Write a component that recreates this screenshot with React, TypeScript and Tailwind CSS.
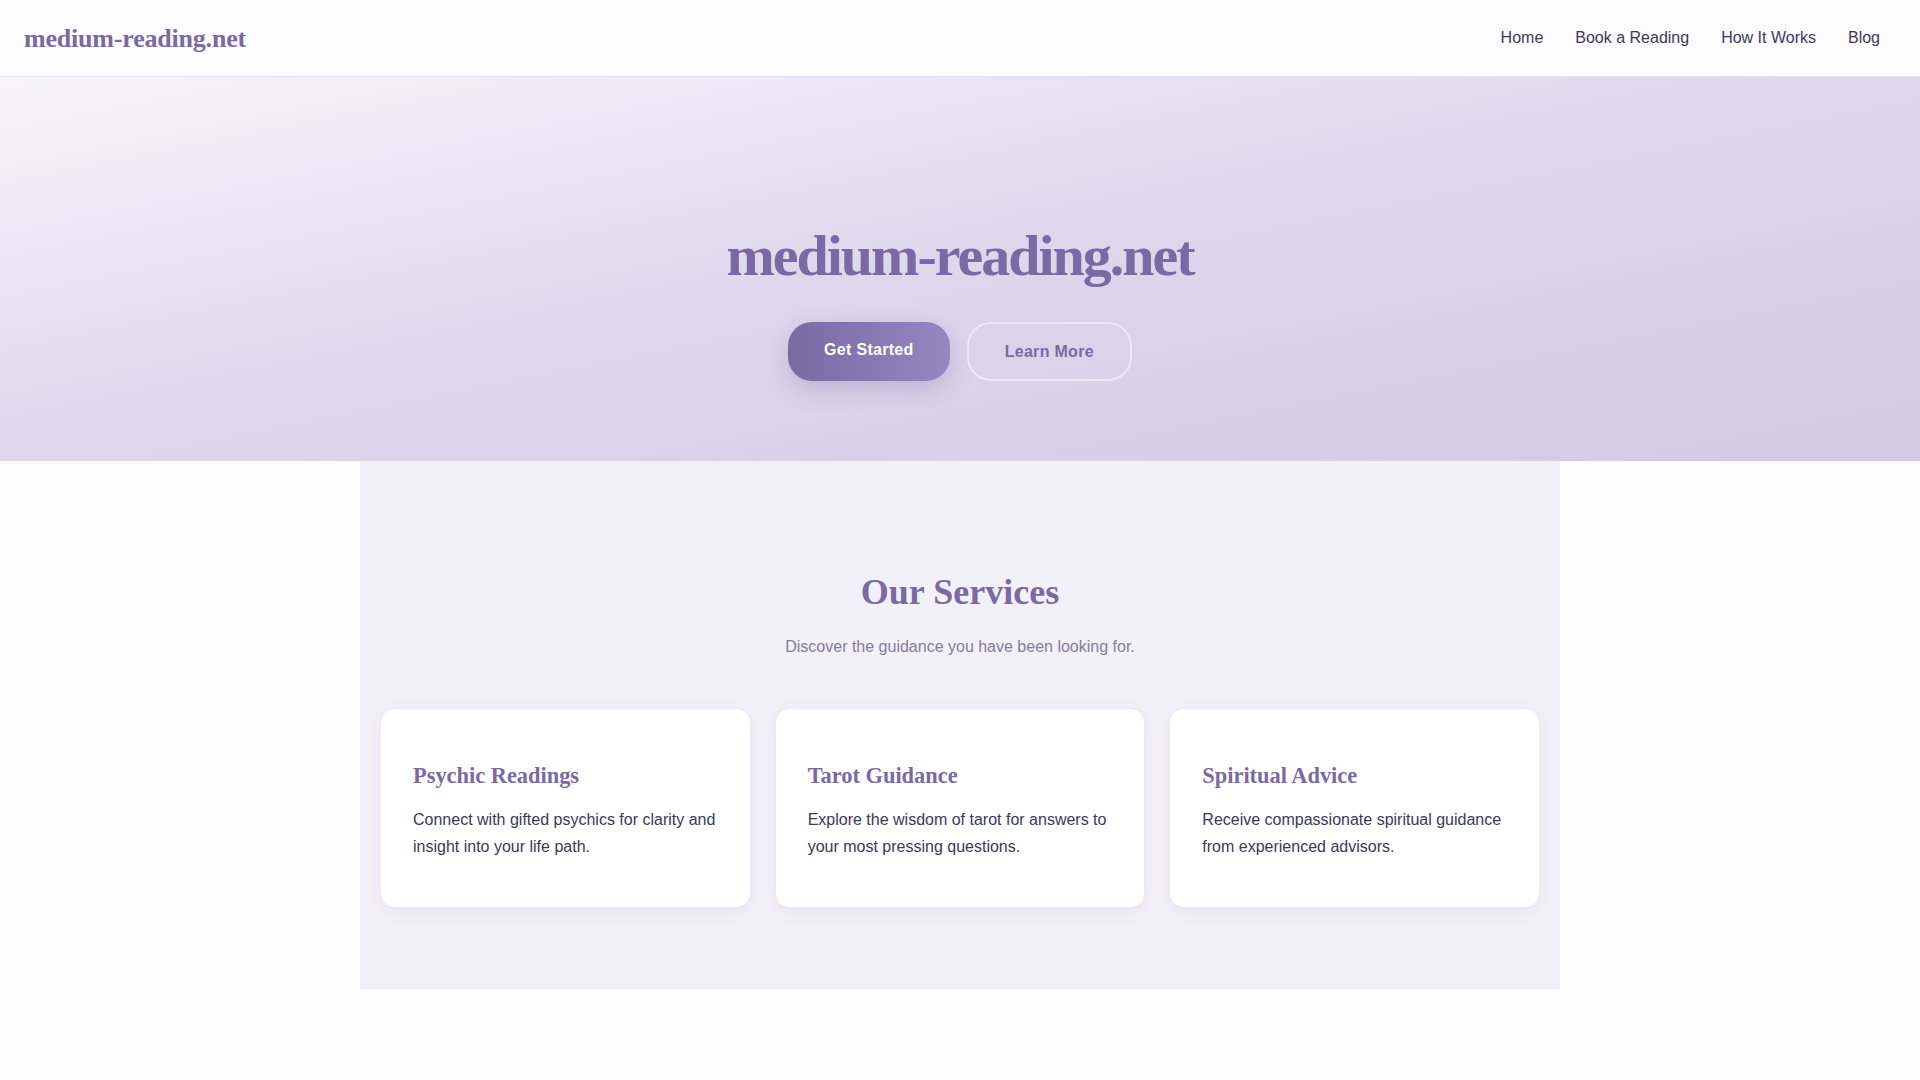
import React from 'react';

const navLinks = ['Home', 'Book a Reading', 'How It Works', 'Blog'];

const services = [
    {
        title: 'Psychic Readings',
        text: 'Connect with gifted psychics for clarity and insight into your life path.',
    },
    {
        title: 'Tarot Guidance',
        text: 'Explore the wisdom of tarot for answers to your most pressing questions.',
    },
    {
        title: 'Spiritual Advice',
        text: 'Receive compassionate spiritual guidance from experienced advisors.',
    },
];

export default function App() {
    return (
        <div className="min-h-screen bg-[#fcfbfe] font-['Liberation_Sans',Arial,sans-serif] text-[#3d3955]">
            {/* Top bar */}
            <header className="flex h-[77px] items-center justify-between border-b border-[#e6e1f1] bg-[#fcfbfe] pl-6 pr-10">
                <a className="font-['Liberation_Serif',serif] text-[26px] font-bold tracking-[-0.2px] text-[#7a6aa4]">
                    medium-reading.net
                </a>
                <nav className="flex items-center gap-8 text-base text-[#3f3a57]">
                    {navLinks.map((link) => (
                        <a key={link} className="cursor-pointer">{link}</a>
                    ))}
                </nav>
            </header>

            {/* Hero */}
            <section className="flex h-[384px] flex-col items-center bg-gradient-to-br from-[#f7f5fb] via-[#ddd6ec] to-[#d3cae4] pt-[144px]">
                <h1 className="font-['Liberation_Serif',serif] text-[58px] font-bold leading-[1.2] tracking-[-2px] text-[#7a6aa4]">
                    medium-reading.net
                </h1>
                <div className="mt-[31px] flex items-center gap-[17px]">
                    <button className="h-[59px] rounded-3xl bg-gradient-to-r from-[#7a6aa4] to-[#9587c0] px-[36px] pb-[2px] text-base font-bold tracking-[0.3px] text-white shadow-[0_8px_22px_rgba(122,106,164,0.3)]">
                        Get Started
                    </button>
                    <button className="h-[59px] rounded-3xl border-2 border-white/50 px-[36px] pt-[2px] text-base font-bold tracking-[0.3px] text-[#7a6aa4]">
                        Learn More
                    </button>
                </div>
            </section>

            {/* Services */}
            <section className="mx-auto max-w-[1200px] bg-[#f2f0f8] px-5 pb-[81px] pt-[110px]">
                <h2 className="text-center font-['Liberation_Serif',serif] text-4xl font-bold leading-[1.2] text-[#7a6aa4]">
                    Our Services
                </h2>
                <p className="mt-[20px] text-center text-base leading-[1.6] text-[#857ca0]">
                    Discover the guidance you have been looking for.
                </p>
                <div className="mt-12 grid grid-cols-3 gap-6">
                    {services.map((s) => (
                        <div
                            key={s.title}
                            className="rounded-[14px] border border-[#ebe7f4] bg-white px-8 pb-[47px] pt-[52px] shadow-[0_4px_16px_rgba(122,106,164,0.08)]"
                        >
                            <h3 className="font-['Liberation_Serif',serif] text-[22.4px] font-bold leading-[1.3] text-[#7a6aa4]">
                                {s.title}
                            </h3>
                            <p className="mt-4 text-base leading-[1.7] text-[#3d3955]">{s.text}</p>
                        </div>
                    ))}
                </div>
            </section>
        </div>
    );
}
